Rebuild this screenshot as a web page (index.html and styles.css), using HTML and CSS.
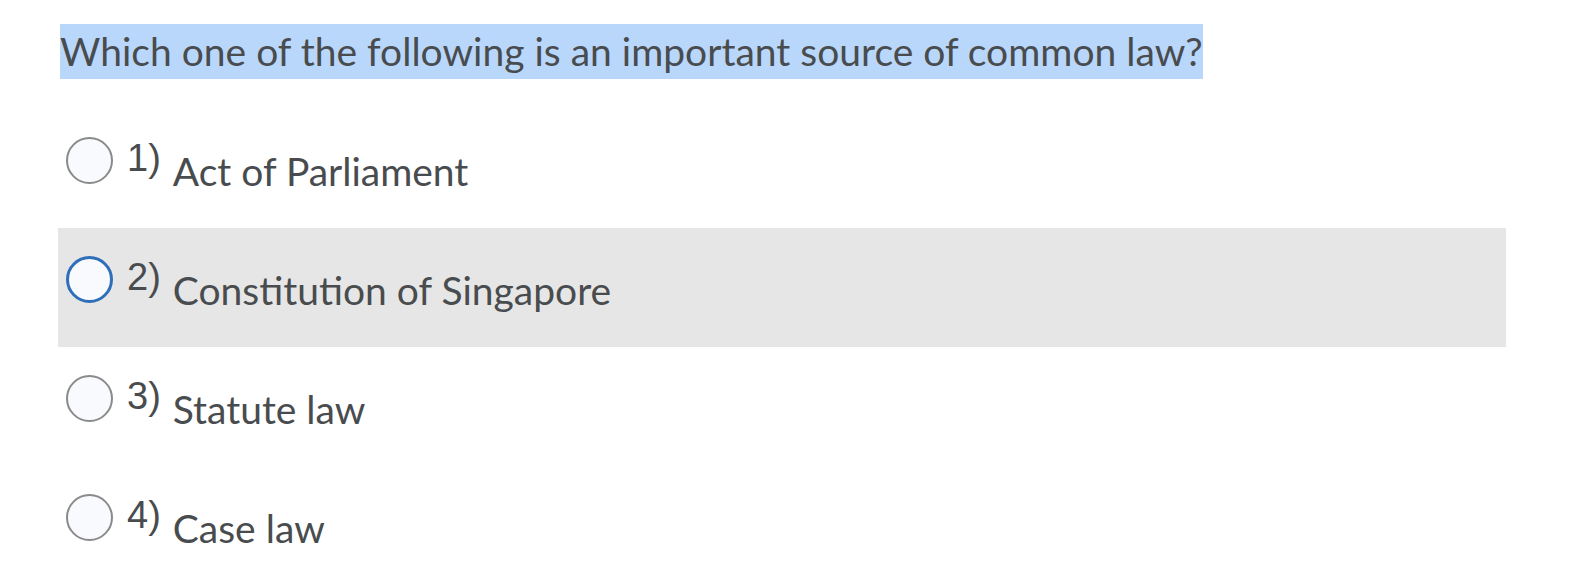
FILE: index.html
```html
<!DOCTYPE html>
<html lang="en">
<head>
    <meta charset="UTF-8">
    <title>Question</title>
    <link rel="stylesheet" href="styles.css">
</head>
<body>
    <div class="quiz">
        <div class="question">Which one of the following is an important source of common law?</div>
        <div class="choices">
            <label class="choice">
                <span class="radio"></span>
                <span class="num">1)</span>
                <span class="text">Act of Parliament</span>
            </label>
            <label class="choice hover">
                <span class="radio focus"></span>
                <span class="num">2)</span>
                <span class="text">Constitution of Singapore</span>
            </label>
            <label class="choice">
                <span class="radio"></span>
                <span class="num">3)</span>
                <span class="text">Statute law</span>
            </label>
            <label class="choice">
                <span class="radio"></span>
                <span class="num">4)</span>
                <span class="text">Case law</span>
            </label>
        </div>
    </div>
</body>
</html>
```

FILE: styles.css
```css
html, body {
    margin: 0;
    background: #fff;
}

body {
    font-family: Lato, "Open Sans", sans-serif;
    color: #494c4e;
}

.quiz {
    padding: 24px 0 0 60px;
}

.question {
    font-size: 39px;
    line-height: 55px;
    width: fit-content;
    background: #b9d7fb; /* text selection */
    margin-bottom: 30px;
}

.choices {
    width: 1448px;
    margin-left: -2px;
}

.choice {
    display: flex;
    align-items: center;
    height: 119px;
    padding-left: 8px;
}
.choice.hover {
    background: #e6e6e6;
}

.radio {
    box-sizing: border-box;
    width: 47px;
    height: 47px;
    border: 2px solid #8a8a8a;
    border-radius: 50%;
    background: #f9fafd;
    flex: none;
    margin-top: -16px;
}
.radio.focus {
    border: 3px solid #2f6fb9;
}

.num {
    font-family: "Liberation Sans", Arial, sans-serif;
    font-size: 38px;
    margin-left: 14px;
    margin-top: -20px;
}

.text {
    font-size: 39px;
    margin-left: 12px;
    margin-top: 4px;
}
```
